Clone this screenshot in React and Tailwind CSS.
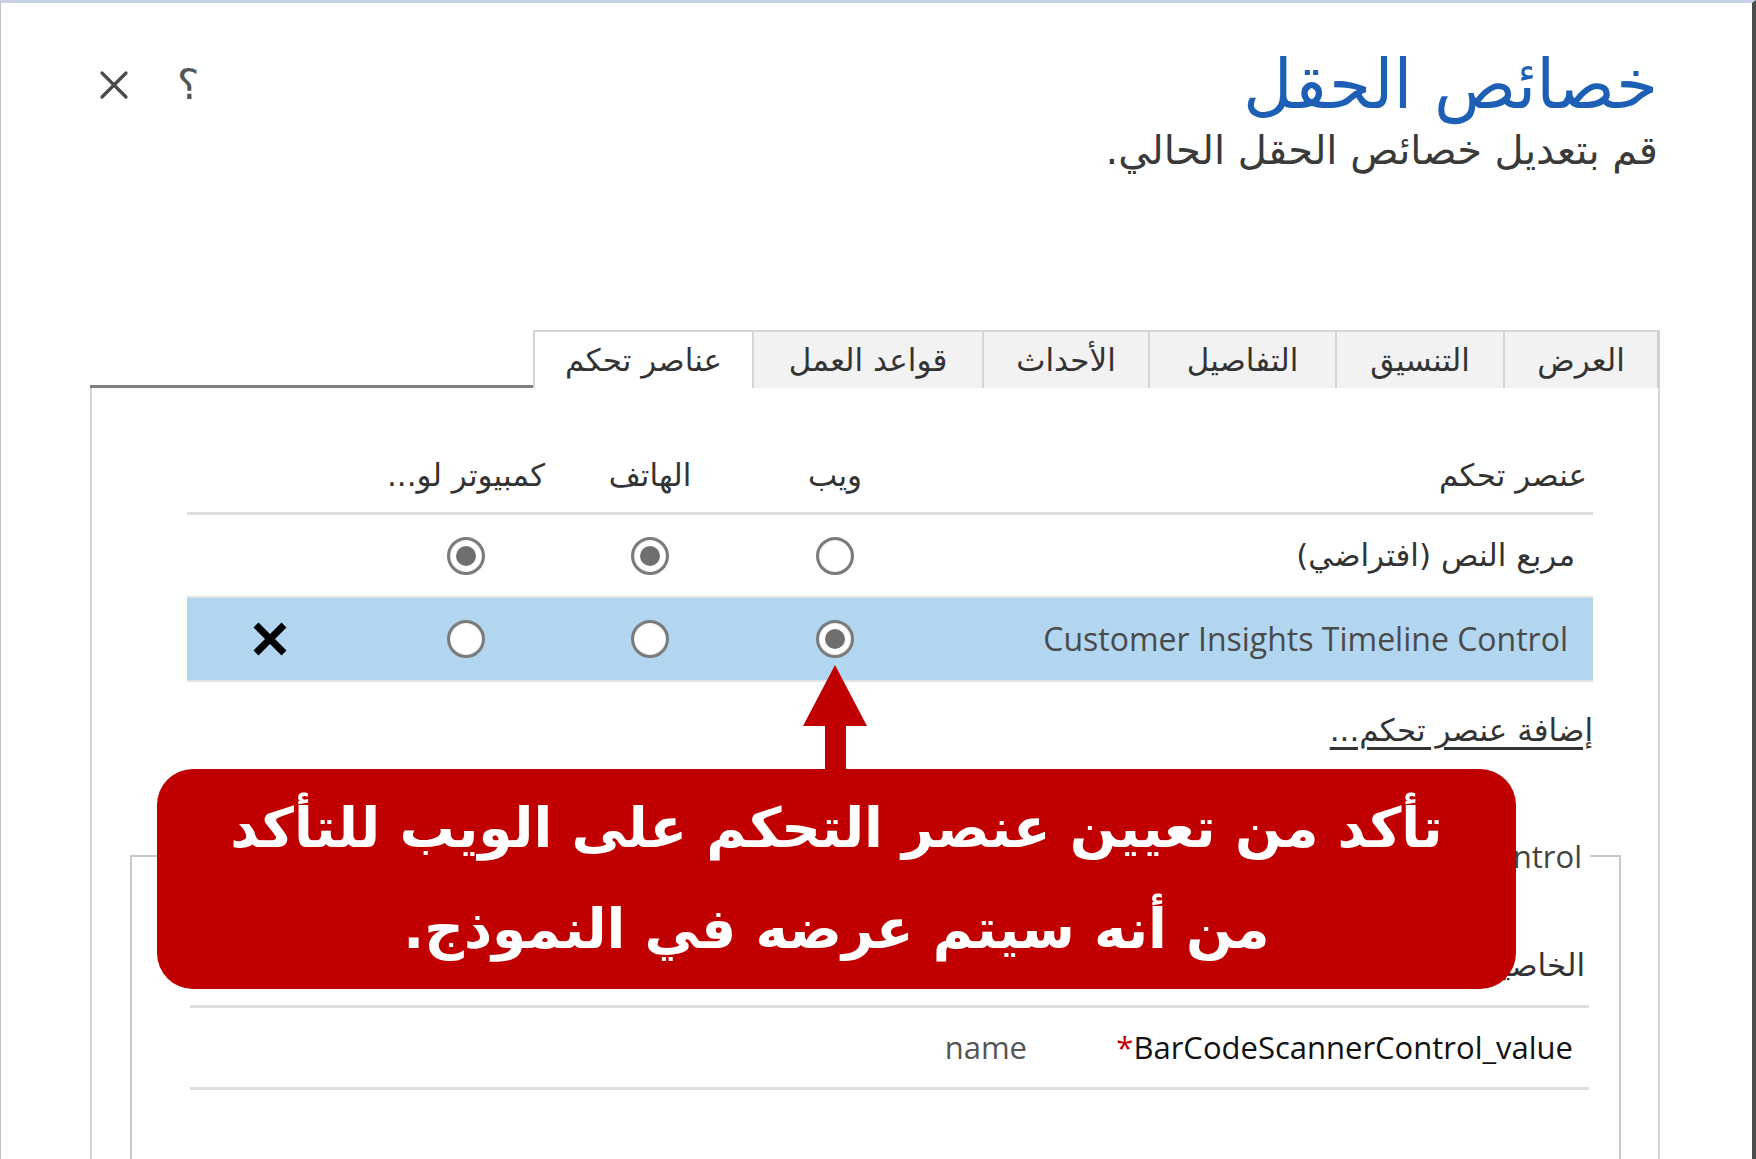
import React from "react";

const Radio = ({ checked }) => (
  <div className="w-[38px] h-[38px] rounded-full border-[3px] border-[#7b7b7b] bg-white flex items-center justify-center shadow-[inset_0_0_1px_#999]">
    {checked && <div className="w-[20px] h-[20px] rounded-full bg-[#6f6f6f]" />}
  </div>
);

const tabs = [
  { label: "العرض", w: "w-[157px]" },
  { label: "التنسيق", w: "w-[168px]" },
  { label: "التفاصيل", w: "w-[187px]" },
  { label: "الأحداث", w: "w-[166px]" },
  { label: "قواعد العمل", w: "w-[230px]" },
  { label: "عناصر تحكم", w: "w-[219px]", active: true },
];

export default function App() {
  return (
    <div className="relative w-[1756px] h-[1159px] overflow-hidden bg-white border-t-[3px] border-t-[#c6d3e6] border-l border-l-[#c4c4c4] border-r-4 border-r-[#4d4d4d] font-['DejaVu_Sans',sans-serif]">
      <div dir="rtl" className="flex flex-col h-full pr-[92px] pl-[89px]">
        {/* header */}
        <div className="flex h-[327px] justify-between items-start shrink-0">
          <div className="flex flex-col pr-[2px]">
            <div className="mt-[46px] text-[68px] leading-[72px] text-[#1c5fb5] whitespace-nowrap">خصائص الحقل</div>
            <div className="mt-[6px] text-[40px] leading-[46px] text-[#3a3a3a] whitespace-nowrap">قم بتعديل خصائص الحقل الحالي.</div>
          </div>
          <div dir="ltr" className="mt-[67px] ml-[9px] flex items-center gap-[48px]">
            <svg width="30" height="30" viewBox="0 0 30 30">
              <path d="M3 3 L27 27 M27 3 L3 27" stroke="#4a4a4a" strokeWidth="3.2" strokeLinecap="round" />
            </svg>
            <span className="text-[42px] leading-[30px] text-[#555]">؟</span>
          </div>
        </div>

        {/* tabs */}
        <div className="flex h-[58px] shrink-0">
          {tabs.map((t, i) => (
            <div
              key={t.label}
              className={`${t.w} h-full flex items-center justify-center border-t-2 border-l-2 border-[#d6d6d6] text-[31px] text-[#333] whitespace-nowrap ${i === 0 ? "border-r-[3px] border-r-[#d0d0d0]" : ""} ${t.active ? "bg-white text-[#222]" : "bg-[#f2f2f2]"}`}
            >
              {t.label}
            </div>
          ))}
          <div className="flex-1 h-full border-b-[3px] border-b-[#808080]" />
        </div>

        {/* panel */}
        <div className="flex-1 flex flex-col border-l-2 border-r-2 border-[#d6d6d6]">
          <div className="ml-[95px] mr-[65px]">
            <div className="mt-[50px] h-[77px] flex items-center border-b-[3px] border-[#dedede] text-[31px] text-[#333] whitespace-nowrap">
              <div className="w-[675px] pr-[6px]">عنصر تحكم</div>
              <div className="w-[166px] text-center">ويب</div>
              <div className="w-[204px] text-center">الهاتف</div>
              <div className="w-[164px] text-center">كمبيوتر لو...</div>
              <div className="flex-1" />
            </div>
            <div className="h-[83px] flex items-center border-b-2 border-[#e3e3e3] text-[31px] text-[#333] whitespace-nowrap">
              <div className="w-[675px] pr-[18px]">مربع النص (افتراضي)</div>
              <div className="w-[166px] flex justify-center"><Radio /></div>
              <div className="w-[204px] flex justify-center"><Radio checked /></div>
              <div className="w-[164px] flex justify-center"><Radio checked /></div>
              <div className="flex-1" />
            </div>
            <div className="h-[84px] flex items-center border-b-2 border-[#e3e3e3] bg-[#b2d6f0]">
              <div dir="ltr" className="w-[675px] pr-[25px] text-right font-['Open_Sans',sans-serif] text-[32px] text-[#4a4a4a] whitespace-nowrap">Customer Insights Timeline Control</div>
              <div className="w-[166px] flex justify-center"><Radio checked /></div>
              <div className="w-[204px] flex justify-center"><Radio /></div>
              <div className="w-[164px] flex justify-center"><Radio /></div>
              <div className="flex-1 flex justify-start pr-[96px]">
                <svg width="36" height="34" viewBox="0 0 36 34">
                  <path d="M4 3 L32 31 M32 3 L4 31" stroke="#000" strokeWidth="7" />
                </svg>
              </div>
            </div>
            <div className="mt-[30px] leading-[36px]">
              <span className="text-[31px] text-[#333] underline underline-offset-[6px] whitespace-nowrap">إضافة عنصر تحكم...</span>
            </div>
          </div>

          <fieldset className="mt-[84px] ml-[38px] mr-[37px] h-[400px] border-2 border-b-0 border-[#c8c8c8]">
            <legend dir="ltr" className="mr-[29px] px-[8px] text-[31px] leading-[36px] text-[#444] font-['Open_Sans',sans-serif] whitespace-nowrap">
              Customer Insights Timeline Control
            </legend>
            <div className="pt-[51px] ml-[58px] mr-[30px]">
              <div className="h-[83px] flex items-center border-b-[3px] border-[#dedede] text-[31px] text-[#333] whitespace-nowrap">
                <div className="w-[546px] pr-[4px]">الخاصية</div>
                <div className="flex-1" />
              </div>
              <div className="h-[82px] flex items-center border-b-[3px] border-[#dedede] text-[31px] font-['Open_Sans',sans-serif] whitespace-nowrap">
                <div dir="ltr" className="w-[546px] pr-[16px] text-right text-[#111]"><span className="text-[#c00000]">*</span>BarCodeScannerControl_value</div>
                <div dir="ltr" className="w-[304px] pr-[16px] text-right text-[#555]">name</div>
                <div className="flex-1" />
              </div>
            </div>
          </fieldset>
        </div>
      </div>

      {/* annotation arrow */}
      <svg className="absolute left-[799px] top-[662px]" width="72" height="110" viewBox="0 0 72 110">
        <path d="M35 0 L67 61 L46 61 L46 110 L25 110 L25 61 L3 61 Z" fill="#c00000" />
      </svg>

      {/* callout */}
      <div dir="rtl" className="absolute left-[156px] top-[766px] w-[1359px] h-[220px] rounded-[36px] bg-[#c00000] flex flex-col items-center justify-center text-white font-bold text-[55px] leading-[101px] whitespace-nowrap font-['DejaVu_Sans',sans-serif]">
        <div>تأكد من تعيين عنصر التحكم على الويب للتأكد</div>
        <div>من أنه سيتم عرضه في النموذج.</div>
      </div>
    </div>
  );
}
